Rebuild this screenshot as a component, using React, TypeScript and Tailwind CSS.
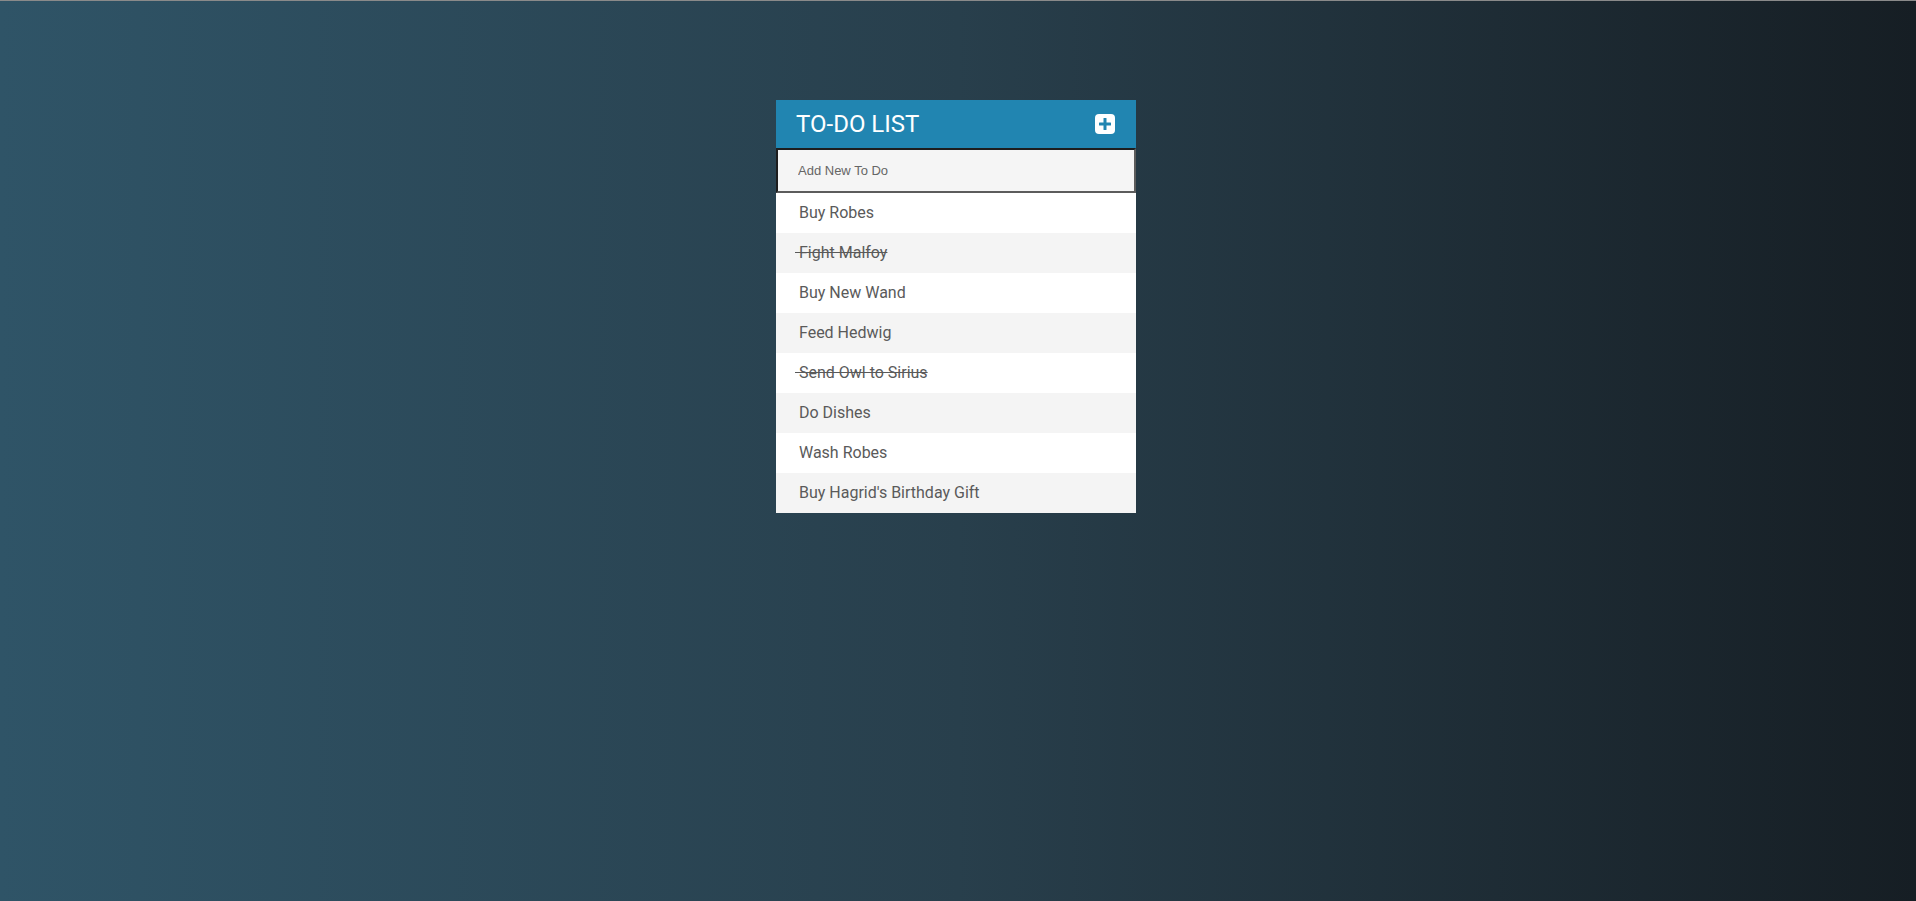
import React from "react";

const todos = [
  { text: "Buy Robes", done: false },
  { text: "Fight Malfoy", done: true },
  { text: "Buy New Wand", done: false },
  { text: "Feed Hedwig", done: false },
  { text: "Send Owl to Sirius", done: true },
  { text: "Do Dishes", done: false },
  { text: "Wash Robes", done: false },
  { text: "Buy Hagrid's Birthday Gift", done: false },
];

export default function App() {
  return (
    <div
      className="flex min-h-[901px] w-full justify-center border-t border-[#8a8a8a] bg-gradient-to-r from-[#2f5467] via-[#283f4c] to-[#161e24] pr-[4px]"
      style={{ fontFamily: "Roboto, 'Noto Sans', sans-serif" }}
    >
      <div className="w-[360px] pt-[99px]">
        <div className="flex h-[48px] items-center justify-between bg-[#2185b1] pl-[20px] pr-[20px]">
          <h1 className="text-[24px] font-normal leading-none text-white">TO-DO LIST</h1>
          <svg width="20" height="20" viewBox="0 0 20 20" className="mr-[1px]">
            <rect x="0" y="0" width="20" height="20" rx="4" fill="#ffffff" />
            <rect x="8.5" y="4" width="3" height="12" rx="0.5" fill="#2185b1" />
            <rect x="4" y="8.5" width="12" height="3" rx="0.5" fill="#2185b1" />
          </svg>
        </div>
        <input
          type="text"
          placeholder="Add New To Do"
          className="block h-[45px] w-full border-2 border-t-[#1e1e1e] border-l-[#1e1e1e] border-b-[#5c5c5c] border-r-[#5c5c5c] bg-[#f5f5f5] pl-[20px] text-[13px] text-[#666] placeholder:text-[#666] outline-none"
          style={{ fontFamily: "'Liberation Sans', Arial, sans-serif" }}
        />
        <ul>
          {todos.map((t, i) => (
            <li
              key={t.text}
              className={`flex h-[40px] items-center pl-[19px] text-[16px] text-[#5a5a5a] ${
                i % 2 === 1 ? "bg-[#f4f4f4]" : "bg-white"
              } ${t.done ? "line-through decoration-[#5a5a5a]" : ""}`}
            >
              <span className="whitespace-pre">{" " + t.text}</span>
            </li>
          ))}
        </ul>
      </div>
    </div>
  );
}
